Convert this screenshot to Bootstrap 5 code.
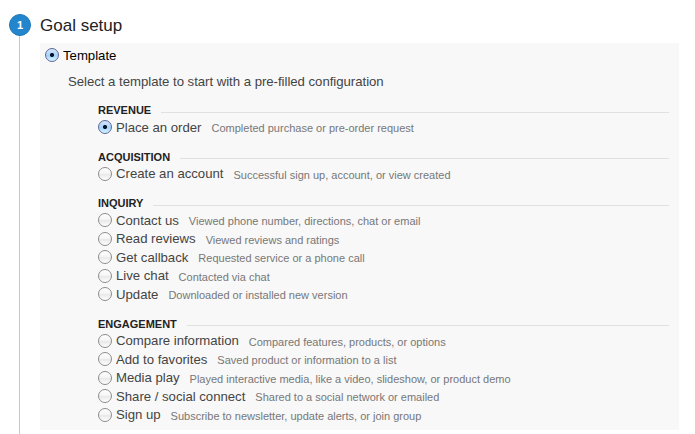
<!DOCTYPE html>
<html lang="en">
<head>
<meta charset="utf-8">
<meta name="viewport" content="width=device-width, initial-scale=1">
<title>Goal setup</title>
<link href="https://cdn.jsdelivr.net/npm/bootstrap@5.3.0/dist/css/bootstrap.min.css" rel="stylesheet">
<style>
body{font-family:"Liberation Sans",Arial,sans-serif;font-size:13.2px;line-height:18px;color:#444;background:#fff}
.page{height:434px;padding-left:9px;padding-right:16px}
.rail{width:22px;padding-top:14px;margin-right:9px}
.step{width:22px;height:22px;background:#2386cd;border:1px solid #1b78bc;color:#fff;font-size:11px;font-weight:700;line-height:1;padding-top:1px}
.rail-line{width:1px;background:#c6c6c6;margin-right:1px}
h1{font-size:17px;line-height:20px;color:#222;padding-top:16px;margin-bottom:7px}
.panel{height:387px;background:#f8f8f8;padding:3px 10px 0 5px}
.intro{margin:8px 0 0 23px;letter-spacing:-.03px}
.groups{margin:10.5px 0 0 53px}
.group{margin-bottom:10.5px}
h2{font-size:11px;line-height:18px;height:17.5px;color:#222;font-weight:700;gap:10px}
h2{padding-top:.5px}
.rule{height:1px;background:#e0e0e0;margin-top:4px}
.option{height:18.5px}
.option label{margin-left:4px;letter-spacing:-.02px;padding-top:.4px}
.option small{font-size:11px;margin-left:10px;color:#777;padding-top:1px}
.lead-option label{padding-top:1px}
.dial{appearance:none;width:14px;height:14px;flex:none;margin:-1px 0 0;border:1px solid #8c8c8c;border-radius:50%;background:linear-gradient(#fff 0,#f5f5f5 45%,#e9e9e9 55%,#fff 100%)}
.lead-option .dial{margin-top:0}
.dial:checked{border-color:#5c6699;background:radial-gradient(circle,#06152c 0 1.7px,transparent 2.4px),linear-gradient(#d3e5fa 0,#b0d5f8 48%,#a3d2fa 55%,#d8f6ff 100%)}
</style>
</head>
<body>
<div class="page d-flex overflow-hidden">
  <div class="rail d-flex flex-column align-items-center flex-shrink-0">
    <div class="step rounded-circle d-flex align-items-center justify-content-center flex-shrink-0">1</div>
    <div class="rail-line flex-grow-1"></div>
  </div>
  <main class="flex-grow-1">
    <h1 class="fw-normal">Goal setup</h1>
    <section class="panel">
      <div class="option lead-option d-flex align-items-center text-black"><input class="dial" type="radio" name="kind" id="k" checked><label for="k">Template</label></div>
      <p class="intro">Select a template to start with a pre-filled configuration</p>
      <div class="groups">
        <div class="group">
          <h2 class="d-flex align-items-center mb-0">REVENUE<span class="rule flex-grow-1"></span></h2>
          <div class="option d-flex align-items-center"><input class="dial" type="radio" name="t" id="a" checked><label for="a">Place an order</label><small>Completed purchase or pre-order request</small></div>
        </div>
        <div class="group">
          <h2 class="d-flex align-items-center mb-0">ACQUISITION<span class="rule flex-grow-1"></span></h2>
          <div class="option d-flex align-items-center"><input class="dial" type="radio" name="t" id="b"><label for="b">Create an account</label><small>Successful sign up, account, or view created</small></div>
        </div>
        <div class="group">
          <h2 class="d-flex align-items-center mb-0">INQUIRY<span class="rule flex-grow-1"></span></h2>
          <div class="option d-flex align-items-center"><input class="dial" type="radio" name="t" id="c"><label for="c">Contact us</label><small>Viewed phone number, directions, chat or email</small></div>
          <div class="option d-flex align-items-center"><input class="dial" type="radio" name="t" id="d"><label for="d">Read reviews</label><small>Viewed reviews and ratings</small></div>
          <div class="option d-flex align-items-center"><input class="dial" type="radio" name="t" id="e"><label for="e">Get callback</label><small>Requested service or a phone call</small></div>
          <div class="option d-flex align-items-center"><input class="dial" type="radio" name="t" id="f"><label for="f">Live chat</label><small>Contacted via chat</small></div>
          <div class="option d-flex align-items-center"><input class="dial" type="radio" name="t" id="g"><label for="g">Update</label><small>Downloaded or installed new version</small></div>
        </div>
        <div class="group">
          <h2 class="d-flex align-items-center mb-0">ENGAGEMENT<span class="rule flex-grow-1"></span></h2>
          <div class="option d-flex align-items-center"><input class="dial" type="radio" name="t" id="h"><label for="h">Compare information</label><small>Compared features, products, or options</small></div>
          <div class="option d-flex align-items-center"><input class="dial" type="radio" name="t" id="i"><label for="i">Add to favorites</label><small>Saved product or information to a list</small></div>
          <div class="option d-flex align-items-center"><input class="dial" type="radio" name="t" id="j"><label for="j">Media play</label><small>Played interactive media, like a video, slideshow, or product demo</small></div>
          <div class="option d-flex align-items-center"><input class="dial" type="radio" name="t" id="l"><label for="l">Share / social connect</label><small>Shared to a social network or emailed</small></div>
          <div class="option d-flex align-items-center"><input class="dial" type="radio" name="t" id="m"><label for="m">Sign up</label><small>Subscribe to newsletter, update alerts, or join group</small></div>
        </div>
      </div>
    </section>
  </main>
</div>
<script src="https://cdn.jsdelivr.net/npm/bootstrap@5.3.0/dist/js/bootstrap.bundle.min.js"></script>
</body>
</html>
